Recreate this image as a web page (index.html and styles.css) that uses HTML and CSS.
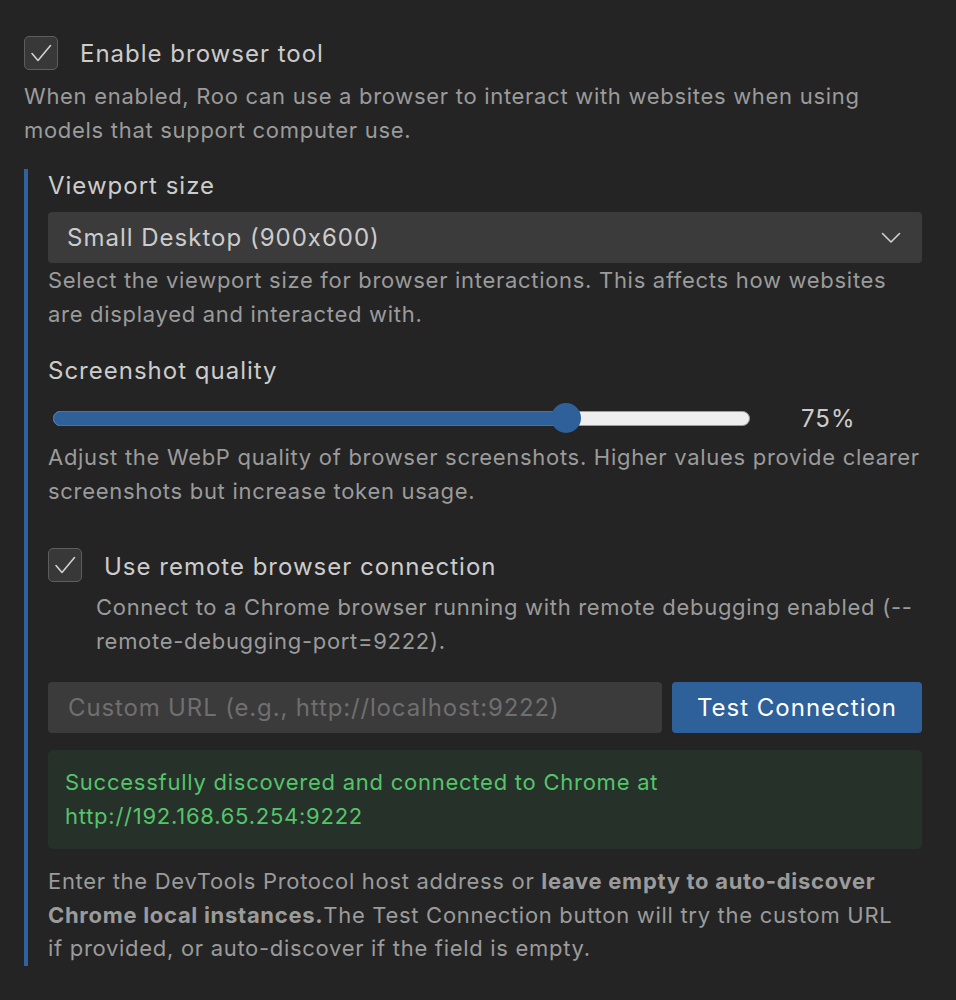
FILE: index.html
```html
<!DOCTYPE html>
<html>
<head>
<meta charset="utf-8">
<link rel="stylesheet" href="styles.css">
</head>
<body>
<div class="panel">
  <label class="check-row">
    <span class="checkbox">
      <svg viewBox="0 0 34 34" width="34" height="34"><path d="M8 17.5 L14 24.5 L26.5 9.5" fill="none" stroke="#d0d0d0" stroke-width="1.6" stroke-linecap="round" stroke-linejoin="round"/></svg>
    </span>
    <span class="check-label">Enable browser tool</span>
  </label>
  <p class="desc top-desc">When enabled, Roo can use a browser to interact with websites when using models that support computer use.</p>

  <div class="section">
    <div class="label">Viewport size</div>
    <div class="select">
      <span>Small Desktop (900x600)</span>
      <svg class="chevron" viewBox="0 0 20 12" width="20" height="12"><path d="M1.5 1.5 L10 10 L18.5 1.5" fill="none" stroke="#d0d0d0" stroke-width="1.6" stroke-linecap="round" stroke-linejoin="round"/></svg>
    </div>
    <p class="desc">Select the viewport size for browser interactions. This affects how websites are displayed and interacted with.</p>

    <div class="label label-gap">Screenshot quality</div>
    <div class="slider-row">
      <div class="track">
        <div class="fill" style="width: 73.7%"></div>
        <div class="thumb" style="left: calc(73.7% - 15px)"></div>
      </div>
      <span class="value">75%</span>
    </div>
    <p class="desc slider-desc">Adjust the WebP quality of browser screenshots. Higher values provide clearer screenshots but increase token usage.</p>

    <label class="check-row remote-row">
      <span class="checkbox">
        <svg viewBox="0 0 34 34" width="34" height="34"><path d="M8 17.5 L14 24.5 L26.5 9.5" fill="none" stroke="#d0d0d0" stroke-width="1.6" stroke-linecap="round" stroke-linejoin="round"/></svg>
      </span>
      <span class="check-label">Use remote browser connection</span>
    </label>
    <p class="desc indent-desc">Connect to a Chrome browser running with remote debugging enabled (--remote-debugging-port=9222).</p>

    <div class="url-row">
      <div class="input">Custom URL (e.g., http://localhost:9222)</div>
      <button class="btn">Test Connection</button>
    </div>

    <div class="success">Successfully discovered and connected to Chrome at http://192.168.65.254:9222</div>

    <p class="desc final-desc">Enter the DevTools Protocol host address or <b>leave empty to auto-discover Chrome local instances.</b>The Test Connection button will try the custom URL if provided, or auto-discover if the field is empty.</p>
  </div>
</div>
</body>
</html>
```
FILE: styles.css
```css
html, body {
  margin: 0;
  padding: 0;
  background: #242424;
}
body {
  font-family: Inter, "Noto Sans", "Liberation Sans", sans-serif;
  font-feature-settings: "calt" 0;
  color: #cccccc;
  width: 956px;
  height: 1000px;
  overflow: hidden;
}
.panel {
  padding: 36px 34px 0 24px;
}
.check-row {
  display: flex;
  align-items: center;
  gap: 22px;
}
.checkbox {
  width: 34px;
  height: 34px;
  box-sizing: border-box;
  border: 1.5px solid #5e5e5e;
  border-radius: 5px;
  background: #383838;
  display: flex;
  align-items: center;
  justify-content: center;
  flex: none;
}
.checkbox svg {
  display: block;
  margin: -1.5px;
}
.check-label {
  font-size: 24px;
  line-height: 34px;
  letter-spacing: 1px;
  color: #cccccc;
  position: relative;
  top: 1px;
}
.desc {
  margin: 0;
  font-size: 22px;
  line-height: 33.5px;
  letter-spacing: 0.7px;
  color: #9b9b9b;
}
.desc b {
  font-weight: 700;
}
.top-desc {
  margin-top: 10px;
}
.section {
  margin-top: 22px;
  border-left: 4px solid #2f63a0;
  padding-left: 20px;
}
.label {
  font-size: 24px;
  line-height: 33px;
  letter-spacing: 1px;
  color: #cccccc;
}
.select {
  margin-top: 10px;
  height: 51px;
  background: #3b3b3b;
  border-radius: 4px;
  display: flex;
  align-items: center;
  justify-content: space-between;
  padding: 0 21px 0 19px;
  font-size: 24px;
  letter-spacing: 1px;
  color: #cccccc;
}
.chevron {
  display: block;
}
.select + .desc {
  margin-top: 1px;
}
.label-gap {
  margin-top: 23px;
}
.slider-row {
  margin-top: 16px;
  height: 30px;
  display: flex;
  align-items: center;
}
.track {
  position: relative;
  margin-left: 5px;
  width: 697px;
  height: 15px;
  box-sizing: border-box;
  border-radius: 8px;
  background: #eeeeee;
  border: 1px solid #9c9c9c;
}
.fill {
  position: absolute;
  left: -1px;
  top: -1px;
  bottom: -1px;
  border-radius: 8px 0 0 8px;
  background: #2e6099;
  border: 1px solid #4a72a3;
  border-right: none;
}
.thumb {
  position: absolute;
  top: 50%;
  width: 30px;
  height: 30px;
  margin-top: -15px;
  border-radius: 50%;
  background: #2e6099;
}
.value {
  margin-left: 51px;
  font-size: 24px;
  letter-spacing: 1px;
  color: #cccccc;
}
.slider-desc {
  margin-top: 8px;
}
.remote-row {
  margin-top: 40px;
}
.remote-row .check-label {
  top: 2px;
}
.indent-desc {
  margin-top: 9px;
  padding-left: 48px;
}
.url-row {
  margin-top: 24px;
  display: flex;
  gap: 10px;
}
.input {
  flex: 1;
  height: 51px;
  box-sizing: border-box;
  background: #3b3b3b;
  border-radius: 4px;
  padding: 0 20px;
  display: flex;
  align-items: center;
  font-size: 24px;
  letter-spacing: 0.85px;
  color: #6f6f6f;
  white-space: nowrap;
  overflow: hidden;
}
.btn {
  width: 250px;
  height: 51px;
  border: none;
  border-radius: 4px;
  background: #2e6099;
  color: #ffffff;
  font-family: inherit;
  font-feature-settings: "calt" 0;
  font-size: 24px;
  letter-spacing: 1px;
  padding: 0;
}
.success {
  margin-top: 17px;
  background: #26312a;
  border-radius: 5px;
  padding: 16px 17px;
  font-size: 22px;
  line-height: 33.5px;
  letter-spacing: 0.75px;
  color: #55c46a;
}
.final-desc {
  margin-top: 16px;
  padding-right: 14px;
}
```
